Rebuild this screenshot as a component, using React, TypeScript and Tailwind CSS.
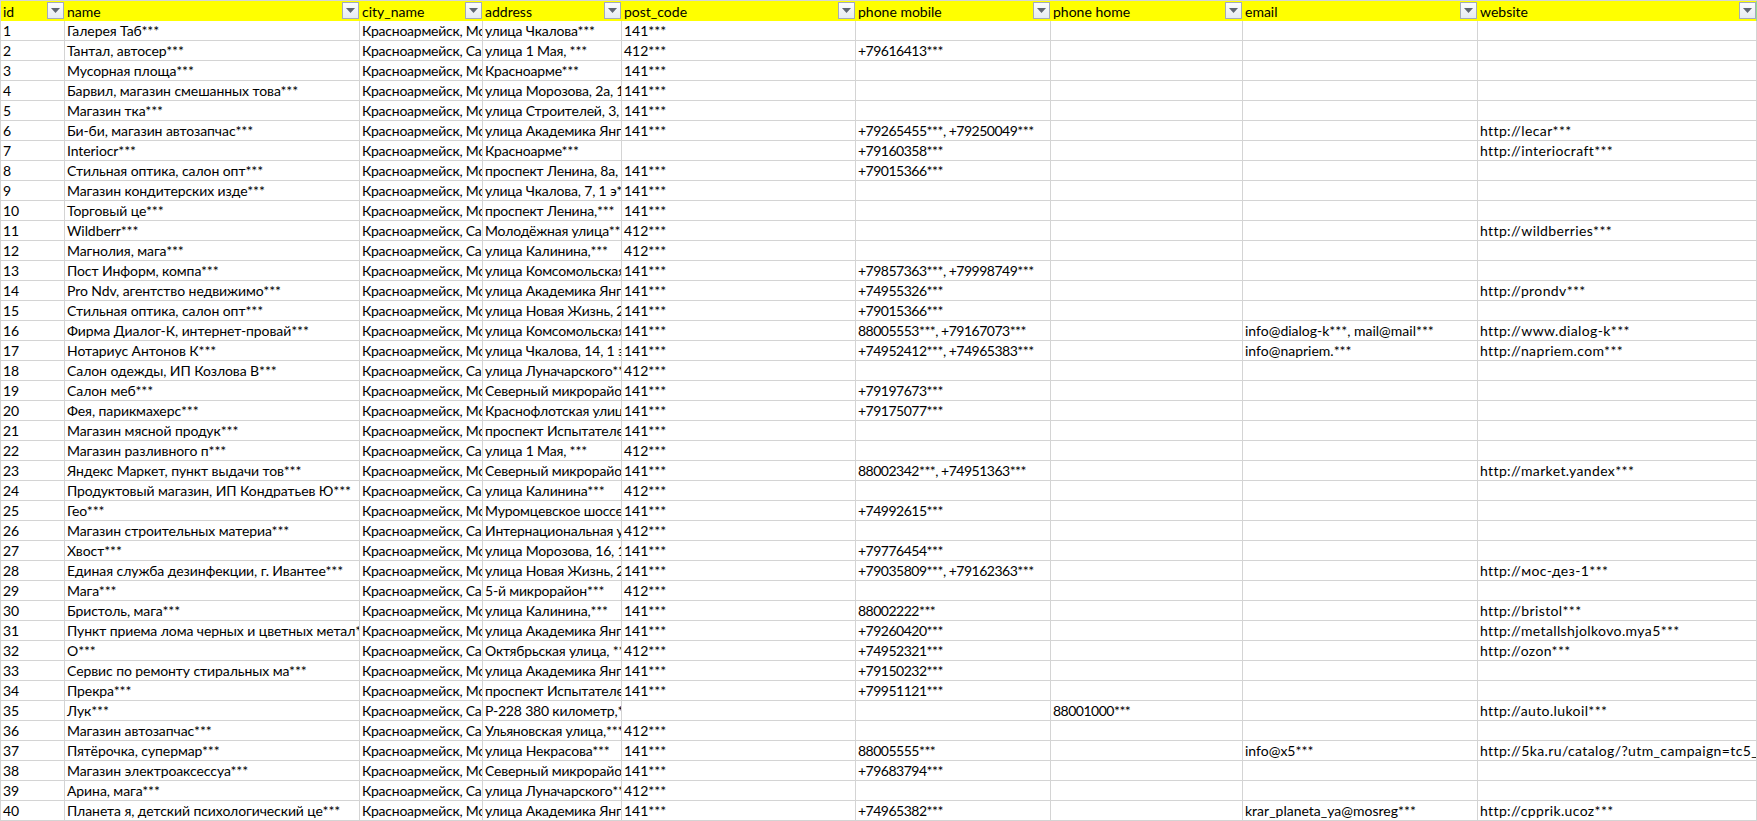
const GRID = "grid grid-cols-[64px_295px_123px_139px_234px_195px_192px_235px_279px]";

const columns = ["id", "name", "city_name", "address", "post_code", "phone mobile", "phone home", "email", "website"];

// Calibri isn't installed, so each column gets its own spacing on top of Lato
const cellTracking = [
  "",
  "tracking-[-0.08px]",
  "tracking-[-0.25px]",
  "tracking-[-0.18px]",
  "",
  "tracking-[-0.5px]",
  "tracking-[-0.5px]",
  "",
  "tracking-[0.38px]",
];

const MSK = "Красноармейск, Московская";
const SAR = "Красноармейск, Саратовская";

// name, city, address, post, mobile, home, email, website
type Row = [string, string, string, string, string?, string?, string?, string?];

const rows: Row[] = [
  ["Галерея Таб***", MSK, "улица Чкалова***", "141***"],
  ["Тантал, автосер***", SAR, "улица 1 Мая, ***", "412***", "+79616413***"],
  ["Мусорная площа***", MSK, "Красноарме***", "141***"],
  ["Барвил, магазин смешанных това***", MSK, "улица Морозова, 2а, 1***", "141***"],
  ["Магазин тка***", MSK, "улица Строителей, 3, ***", "141***"],
  ["Би-би, магазин автозапчас***", MSK, "улица Академика Янгеля***", "141***", "+79265455***, +79250049***", "", "", "http://lecar***"],
  ["Interiocr***", MSK, "Красноарме***", "", "+79160358***", "", "", "http://interiocraft***"],
  ["Стильная оптика, салон опт***", MSK, "проспект Ленина, 8а, ***", "141***", "+79015366***"],
  ["Магазин кондитерских изде***", MSK, "улица Чкалова, 7, 1 э***", "141***"],
  ["Торговый це***", MSK, "проспект Ленина,***", "141***"],
  ["Wildberr***", SAR, "Молодёжная улица***", "412***", "", "", "", "http://wildberries***"],
  ["Магнолия, мага***", SAR, "улица Калинина,***", "412***"],
  ["Пост Информ, компа***", MSK, "улица Комсомольская***", "141***", "+79857363***, +79998749***"],
  ["Pro Ndv, агентство недвижимо***", MSK, "улица Академика Янгеля***", "141***", "+74955326***", "", "", "http://prondv***"],
  ["Стильная оптика, салон опт***", MSK, "улица Новая Жизнь, 2***", "141***", "+79015366***"],
  ["Фирма Диалог-К, интернет-провай***", MSK, "улица Комсомольская***", "141***", "88005553***, +79167073***", "", "info@dialog-k***, mail@mail***", "http://www.dialog-k***"],
  ["Нотариус Антонов К***", MSK, "улица Чкалова, 14, 1 э***", "141***", "+74952412***, +74965383***", "", "info@napriem.***", "http://napriem.com***"],
  ["Салон одежды, ИП Козлова В***", SAR, "улица Луначарского***", "412***"],
  ["Салон меб***", MSK, "Северный микрорайон***", "141***", "+79197673***"],
  ["Фея, парикмахерс***", MSK, "Краснофлотская улица***", "141***", "+79175077***"],
  ["Магазин мясной продук***", MSK, "проспект Испытателей***", "141***"],
  ["Магазин разливного п***", SAR, "улица 1 Мая, ***", "412***"],
  ["Яндекс Маркет, пункт выдачи тов***", MSK, "Северный микрорайон***", "141***", "88002342***, +74951363***", "", "", "http://market.yandex***"],
  ["Продуктовый магазин, ИП Кондратьев Ю***", SAR, "улица Калинина***", "412***"],
  ["Гео***", MSK, "Муромцевское шоссе***", "141***", "+74992615***"],
  ["Магазин строительных материа***", SAR, "Интернациональная улица***", "412***"],
  ["Хвост***", MSK, "улица Морозова, 16, 1***", "141***", "+79776454***"],
  ["Единая служба дезинфекции, г. Ивантее***", MSK, "улица Новая Жизнь, 2***", "141***", "+79035809***, +79162363***", "", "", "http://мос-дез-1***"],
  ["Мага***", SAR, "5-й микрорайон***", "412***"],
  ["Бристоль, мага***", MSK, "улица Калинина,***", "141***", "88002222***", "", "", "http://bristol***"],
  ["Пункт приема лома черных и цветных метал***", MSK, "улица Академика Янгеля***", "141***", "+79260420***", "", "", "http://metallshjolkovo.mya5***"],
  ["О***", SAR, "Октябрьская улица, ***", "412***", "+74952321***", "", "", "http://ozon***"],
  ["Сервис по ремонту стиральных ма***", MSK, "улица Академика Янгеля***", "141***", "+79150232***"],
  ["Прекра***", MSK, "проспект Испытателей***", "141***", "+79951121***"],
  ["Лук***", SAR, "Р-228 380 километр,*", "", "", "88001000***", "", "http://auto.lukoil***"],
  ["Магазин автозапчас***", SAR, "Ульяновская улица,***", "412***"],
  ["Пятёрочка, супермар***", MSK, "улица Некрасова***", "141***", "88005555***", "", "info@x5***", "http://5ka.ru/catalog/?utm_campaign=tc5_organic***"],
  ["Магазин электроаксессуа***", MSK, "Северный микрорайон***", "141***", "+79683794***"],
  ["Арина, мага***", SAR, "улица Луначарского***", "412***"],
  ["Планета я, детский психологический це***", MSK, "улица Академика Янгеля***", "141***", "+74965382***", "", "krar_planeta_ya@mosreg***", "http://cpprik.ucoz***"],
];

function FilterButton() {
  return (
    <div className="flex h-[17px] w-[17px] shrink-0 items-center justify-center border border-[#a3abba] bg-gradient-to-b from-[#fbfcfd] to-[#e6ebf2]">
      <svg width="9" height="5" viewBox="0 0 9 5">
        <path d="M0 0H9L4.5 5Z" fill="#5f6672" />
      </svg>
    </div>
  );
}

export default function App() {
  return (
    <div className="h-[821px] w-[1757px] overflow-hidden border-l border-[#d4d4d4] bg-white text-[14px] text-black [font-family:Lato,sans-serif]">
      <div className={`${GRID} h-[21px] border-t border-[#d4d4d4] bg-[#ffff00]`}>
        {columns.map((col, c) => (
          <div
            key={col}
            className={`flex items-start justify-between pl-[2px] pt-px leading-[19px] ${c === 8 ? "border-r border-[#8fdc96]" : "pr-px"}`}
          >
            <span>{col}</span>
            <FilterButton />
          </div>
        ))}
      </div>
      {rows.map((row, i) => {
        const cells = [String(i + 1), ...row];
        return (
          <div key={i} className={`${GRID} h-5 border-b border-[#d4d4d4]`}>
            {columns.map((col, c) => (
              <div
                key={col}
                className={`overflow-hidden whitespace-nowrap border-r border-[#d4d4d4] pl-[2px] leading-[19px] ${cellTracking[c]}`}
              >
                {cells[c]}
              </div>
            ))}
          </div>
        );
      })}
    </div>
  );
}
